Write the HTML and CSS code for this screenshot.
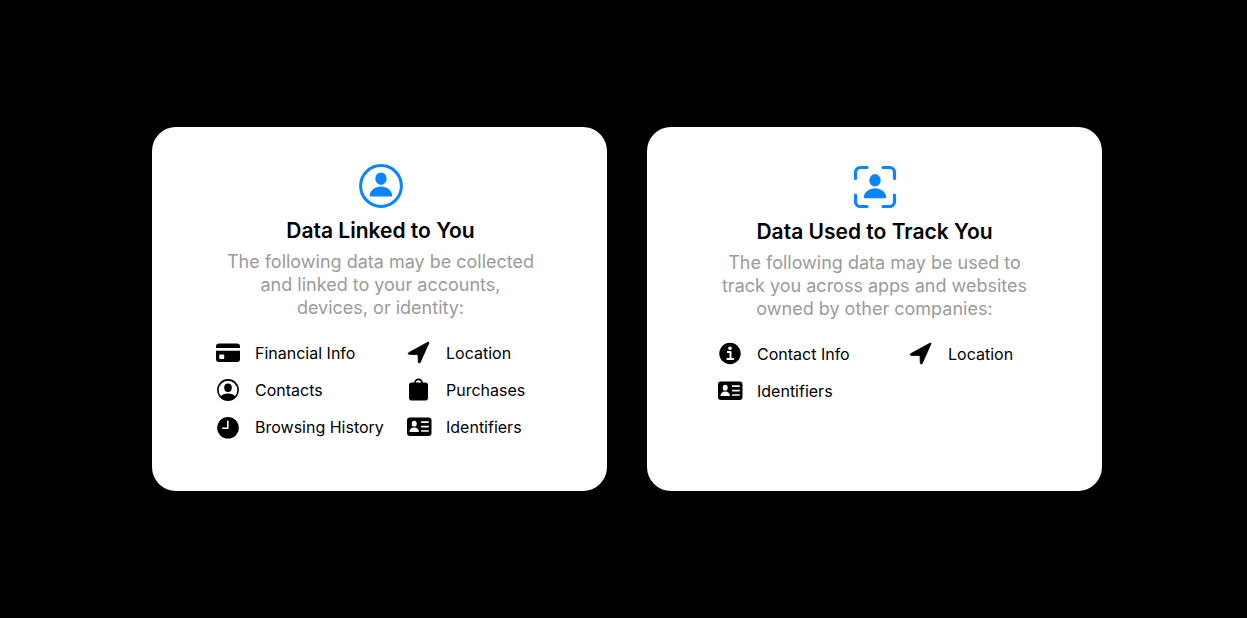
FILE: index.html
```
<!DOCTYPE html>
<html lang="en">
<head>
    <meta charset="UTF-8">
    <meta name="viewport" content="width=device-width, initial-scale=1.0">
    <title>App Privacy</title>
    <link rel="stylesheet" href="styles.css">
</head>
<body>

    <!-- Shared icons -->
    <svg class="icon-defs" aria-hidden="true">
        <symbol id="icon-location" viewBox="0 0 26 24">
            <path d="M22.9 2 14.2 21.4c-.4.9-1.8.8-1.9-.3l-.3-7.5-8.800-.2c-1.100 0-1.300-1.400-.3-1.800L21.900 1.200c.7-.3 1.300.1 1 .8z" stroke="currentColor" stroke-width=".8" stroke-linejoin="round"/>
        </symbol>
        <symbol id="icon-identifiers" viewBox="0 0 26 24">
            <rect x="1" y="2.5" width="24.5" height="18.5" rx="3"/>
            <g fill="#fff">
                <ellipse cx="8.2" cy="8.7" rx="2.5" ry="2.9"/>
                <path d="M3.500 17c0-3 1.800-4.600 4.700-4.600s4.700 1.600 4.700 4.600z"/>
                <rect x="14.8" y="6.3" width="8.2" height="1.6" rx=".8"/>
                <rect x="14.8" y="10.8" width="8.2" height="1.6" rx=".8"/>
                <rect x="14.8" y="15.2" width="8.2" height="1.6" rx=".8"/>
            </g>
        </symbol>
    </svg>

    <main class="cards">
        <section class="card">
            <svg class="card-icon" viewBox="0 0 44 44" aria-hidden="true">
                <circle cx="22" cy="22" r="20.4" fill="none" stroke="currentColor" stroke-width="3"/>
                <ellipse cx="22" cy="14.7" rx="5.7" ry="6.2"/>
                <path d="M12 32.6c-.8 0-1.4-.6-1.2-1.5.7-4.9 5.2-8.5 11.2-8.5s10.5 3.6 11.2 8.5c.2.9-.4 1.5-1.2 1.5z"/>
            </svg>
            <h2 class="card-title">Data Linked to You</h2>
            <p class="card-text">The following data may be collected<br>and linked to your accounts,<br>devices, or identity:</p>
            <ul class="data-list">
                <li class="data-item">
                    <svg class="data-icon" viewBox="0 0 26 24" aria-hidden="true">
                        <path d="M1 7V5.5a3 3 0 0 1 3-3h18a3 3 0 0 1 3 3V7z"/>
                        <path fill-rule="evenodd" d="M1 9.8h24V18a3 3 0 0 1-3 3H4a3 3 0 0 1-3-3zM5 13.5a.7.7 0 0 0-.7.7v3.2c0 .4.3.7.7.7h3.5c.4 0 .7-.3.7-.7v-3.2a.7.7 0 0 0-.7-.7z"/>
                    </svg>
                    Financial Info
                </li>
                <li class="data-item">
                    <svg class="data-icon" viewBox="0 0 26 24" aria-hidden="true"><use href="#icon-location"/></svg>
                    Location
                </li>
                <li class="data-item">
                    <svg class="data-icon" viewBox="0 0 26 24" aria-hidden="true">
                        <circle cx="13" cy="12" r="10.1" fill="none" stroke="currentColor" stroke-width="1.6"/>
                        <ellipse cx="13" cy="9.8" rx="3.8" ry="4.2"/>
                        <path d="M5.8 18.8c1.3-2.2 4-3.3 7.2-3.3s5.9 1.1 7.2 3.3A10 10 0 0 1 13 22a10 10 0 0 1-7.2-3.2z"/>
                    </svg>
                    Contacts
                </li>
                <li class="data-item">
                    <svg class="data-icon" viewBox="0 0 26 24" aria-hidden="true">
                        <rect x="3" y="4.5" width="19" height="18" rx="2.8"/>
                        <path d="M9 6V4.7a3.5 3.3 0 0 1 7 0V6" fill="none" stroke="currentColor" stroke-width="1.6"/>
                    </svg>
                    Purchases
                </li>
                <li class="data-item">
                    <svg class="data-icon" viewBox="0 0 26 24" aria-hidden="true">
                        <circle cx="13" cy="12.8" r="10.8"/>
                        <path d="M12.8 6.3v6.9h-5" fill="none" stroke="#fff" stroke-width="1.6" stroke-linecap="round" stroke-linejoin="round"/>
                    </svg>
                    Browsing History
                </li>
                <li class="data-item">
                    <svg class="data-icon" viewBox="0 0 26 24" aria-hidden="true"><use href="#icon-identifiers"/></svg>
                    Identifiers
                </li>
            </ul>
        </section>

        <section class="card card-track">
            <svg class="card-icon" viewBox="0 0 44 44" aria-hidden="true">
                <path d="M2.5 13.5v-6a5 5 0 0 1 5-5H14M30 2.5h6.5a5 5 0 0 1 5 5v6M41.5 30v6.5a5 5 0 0 1-5 5H30M14 41.5H7.5a5 5 0 0 1-5-5V30" fill="none" stroke="currentColor" stroke-width="3.2" stroke-linecap="round"/>
                <ellipse cx="22" cy="15.3" rx="5.7" ry="6.2"/>
                <path d="M12 33.2c-.8 0-1.4-.6-1.2-1.5.7-4.9 5.2-8.5 11.2-8.5s10.5 3.6 11.2 8.5c.2.9-.4 1.5-1.2 1.5z"/>
            </svg>
            <h2 class="card-title">Data Used to Track You</h2>
            <p class="card-text">The following data may be used to<br>track you across apps and websites<br>owned by other companies:</p>
            <ul class="data-list">
                <li class="data-item">
                    <svg class="data-icon" viewBox="0 0 26 24" aria-hidden="true">
                        <circle cx="13" cy="11.5" r="10.7"/>
                        <circle cx="13" cy="6.2" r="1.8" fill="#fff"/>
                        <path d="M10.8 10.1h2.7v6.6M10.3 16.9h5.9" fill="none" stroke="#fff" stroke-width="2" stroke-linecap="round" stroke-linejoin="round"/>
                    </svg>
                    Contact Info
                </li>
                <li class="data-item">
                    <svg class="data-icon" viewBox="0 0 26 24" aria-hidden="true"><use href="#icon-location"/></svg>
                    Location
                </li>
                <li class="data-item">
                    <svg class="data-icon" viewBox="0 0 26 24" aria-hidden="true"><use href="#icon-identifiers"/></svg>
                    Identifiers
                </li>
            </ul>
        </section>
    </main>

</body>
</html>
```
FILE: styles.css
```
body {
    margin: 0;
    background: #000000;
    color: #000000;
    font-family: Inter, "Liberation Sans", Arial, sans-serif;
}

.icon-defs {
    display: none;
}

.cards {
    box-sizing: border-box;
    min-height: 100vh;
    padding: 20px 145px 20px 152px;
    display: grid;
    grid-template-columns: 1fr 1fr;
    gap: 40px;
    align-content: center;
}

.card {
    padding: 37px 32px 46px 34px;
    background: #ffffff;
    border-radius: 24px;
    display: flex;
    flex-direction: column;
    align-items: center;
}

.card-track {
    padding: 38px 32px 45px;
}

.card-icon {
    width: 44px;
    height: 44px;
    color: #0a84ff; /* iOS blue */
    fill: currentColor;
}

.card-title {
    margin: 9px 0 0;
    font-size: 21px;
    font-weight: 600;
    line-height: 28px;
}

.card-text {
    margin: 5px 0 0;
    font-size: 18px;
    line-height: 23px;
    text-align: center;
    color: #9b9b9b;
}

.data-list {
    list-style: none;
    margin: 15px 0 0;
    padding: 0;
    display: grid;
    grid-template-columns: 191px 140px;
    grid-auto-rows: 37px;
}

.card-track .data-list {
    margin-left: 16px;
}

.data-item {
    display: flex;
    align-items: center;
    gap: 14px;
    font-size: 16px;
    white-space: nowrap;
}

.data-icon {
    flex: none;
    width: 26px;
    height: 24px;
    fill: currentColor;
}
```
